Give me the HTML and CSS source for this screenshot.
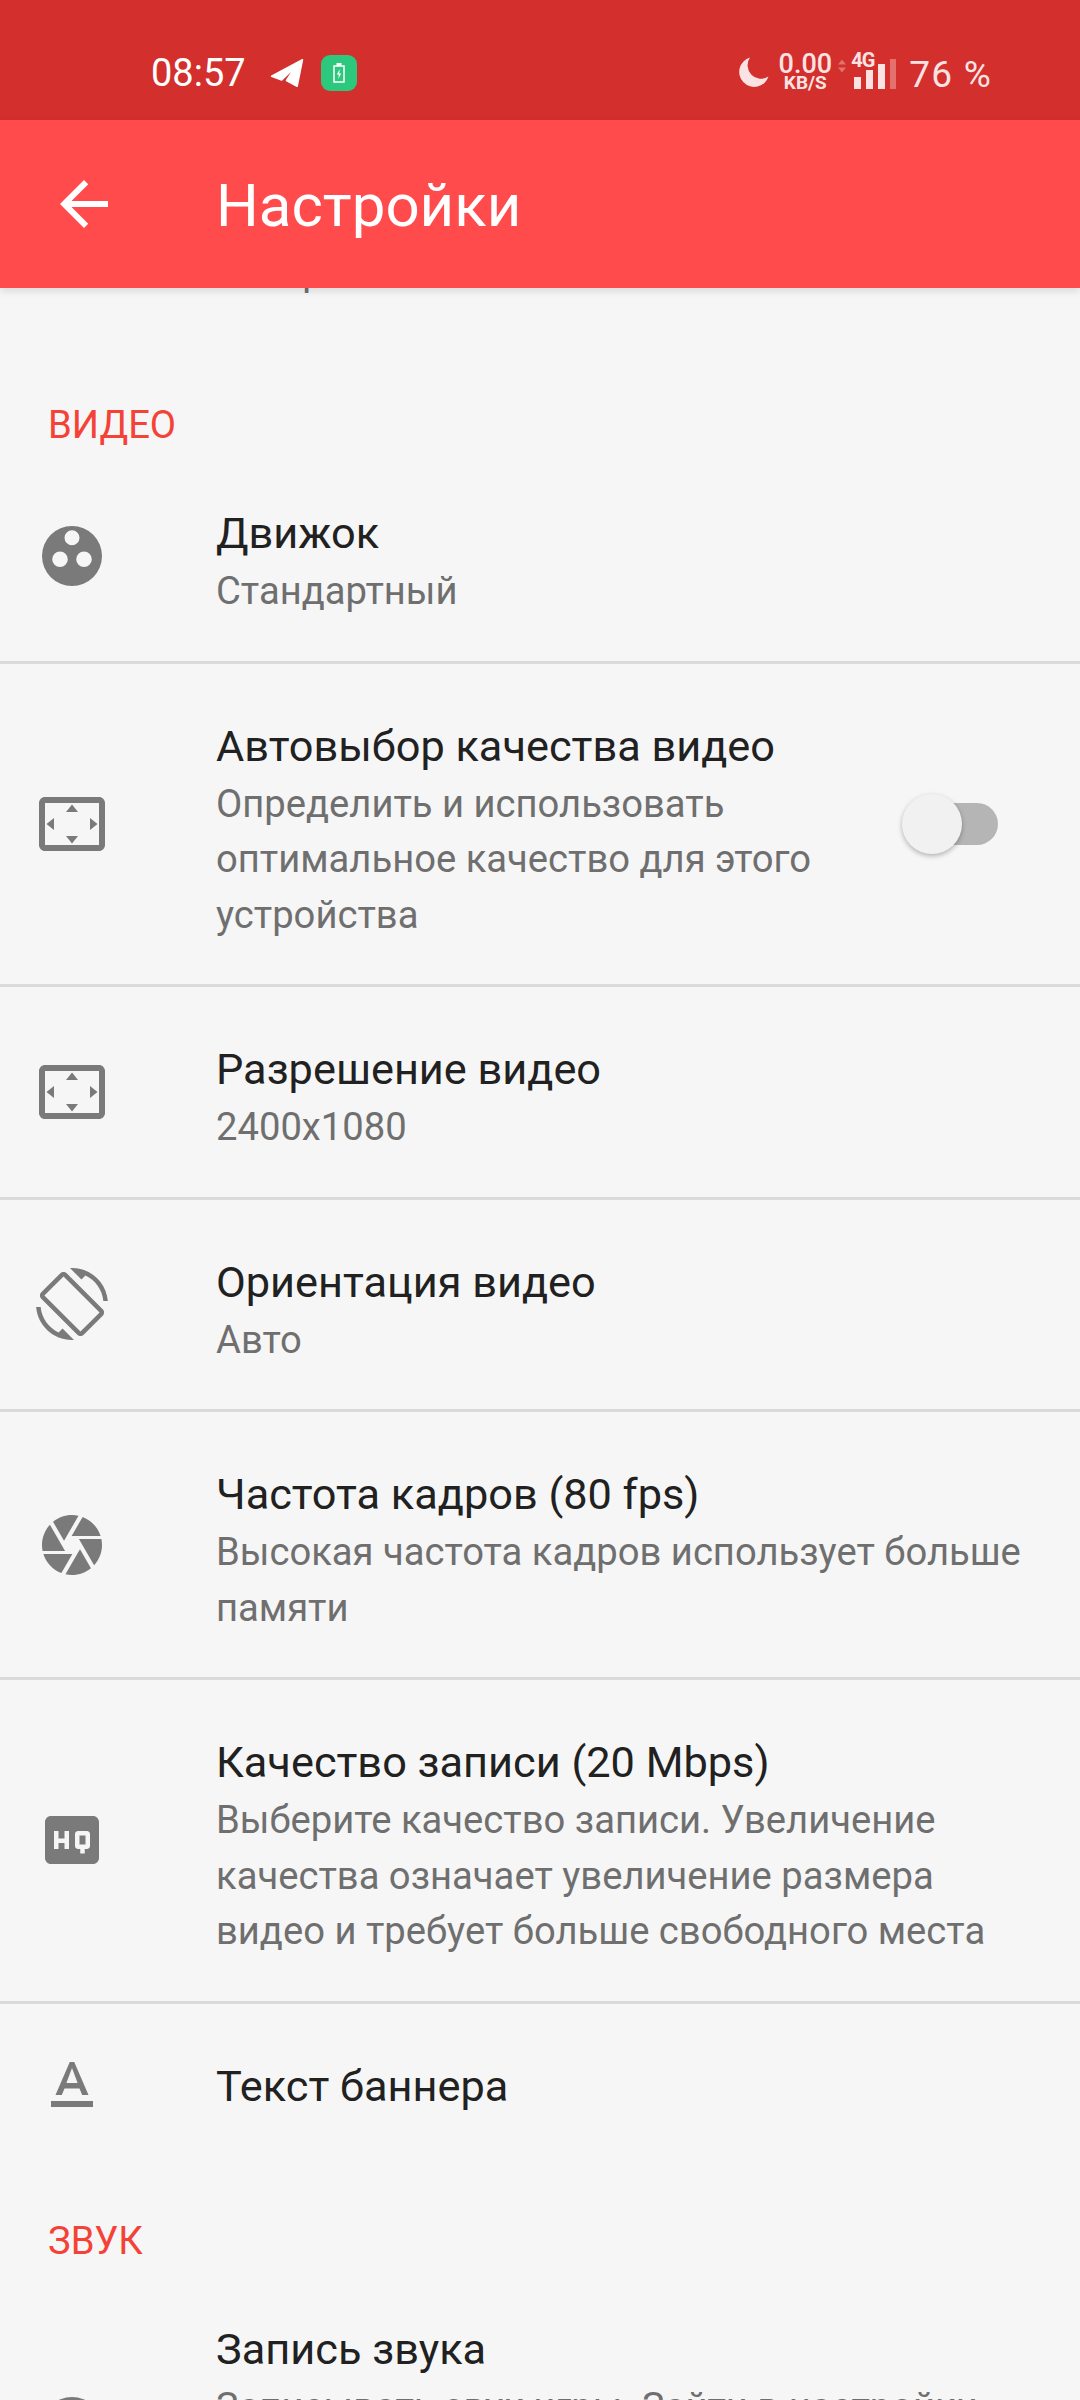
FILE: index.html
```html
<!DOCTYPE html>
<html lang="ru">
<head>
<meta charset="utf-8">
<title>Настройки</title>
<link rel="stylesheet" href="styles.css">
</head>
<body>
<div class="screen">
  <header class="statusbar">
    <div class="status-left">
      <span class="time">08:57</span>
      <svg class="tg" viewBox="0 0 32 28"><path d="M1.5 17 L30.5 1.5 L25.5 26.5 L15.5 21 L24 8 L11 20.5 Z"/></svg>
      <span class="badge">
        <svg class="badge-icon" viewBox="0 0 14 22"><path class="bat" d="M2 4h10v16H2z"/><path class="batcap" d="M4.500 1h5v3h-5z"/><path class="batcap" d="M7.800 7 4.800 12.500h2l-.6 4.500 3-5.500h-2z"/></svg>
      </span>
    </div>
    <div class="status-right">
      <svg class="moon" viewBox="0 0 30 30"><path d="M11 0.500A15 15 0 1 0 29.500 19.500 13.500 13.500 0 0 1 11 0.500Z"/></svg>
      <div class="speed"><span class="speed-num">0.00</span><span class="speed-unit">KB/S</span></div>
      <svg class="arrows" viewBox="0 0 10 16"><path d="M5 0 10 6H0zM5 16 0 10h10z"/></svg>
      <div class="signal">
        <span class="net">4G</span>
        <svg class="bars" viewBox="0 0 44 30"><path d="M0 18h7v12H0zM12 11h7v19h-7zM24 5h7v25h-7z"/><path class="bar-off" d="M36 0h6v30h-6z"/></svg>
      </div>
      <span class="pct">76 %</span>
    </div>
  </header>

  <header class="toolbar">
    <svg class="back" viewBox="0 0 24 24"><path d="M20 11H7.830l5.590-5.590L12 4l-8 8 8 8 1.410-1.410L7.830 13H20v-2z"/></svg>
    <h1 class="toolbar-title">Настройки</h1>
  </header>

  <main class="content">
    <div class="peek"><div class="peek-text">Настройки</div></div>

    <h2 class="section">Видео</h2>

    <div class="row">
      <div class="row-icon"><svg class="icon" viewBox="0 0 24 24"><path fill-rule="evenodd" d="M12 2a10 10 0 1 0 0 20 10 10 0 0 0 0-20zM12 3.400a2.500 2.500 0 1 1 0 5 2.500 2.500 0 0 1 0-5zM8 10.500a2.600 2.600 0 1 1 0 5.200 2.600 2.600 0 0 1 0-5.200zM16 10.500a2.600 2.600 0 1 1 0 5.200 2.600 2.600 0 0 1 0-5.200z"/></svg></div>
      <div class="row-text"><div class="title">Движок</div><div class="sub">Стандартный</div></div>
    </div>

    <div class="row">
      <div class="row-icon"><svg class="icon" viewBox="0 0 24 24"><path d="M12.010 5.500L10 8h4l-1.990-2.500zM18 10v4l2.500-1.990L18 10zM6 10l-2.500 2.010L6 14v-4zm8 6h-4l2.010 2.500L14 16zm7-13H3c-1.100 0-2 .9-2 2v14c0 1.100.9 2 2 2h18c1.100 0 2-.9 2-2V5c0-1.100-.9-2-2-2zm0 16.010H3V4.990h18v14.020z"/></svg></div>
      <div class="row-text narrow"><div class="title">Автовыбор качества видео</div><div class="sub">Определить и использовать оптимальное качество для этого устройства</div></div>
      <div class="switch"><span class="switch-thumb"></span></div>
    </div>

    <div class="row">
      <div class="row-icon"><svg class="icon" viewBox="0 0 24 24"><path d="M12.010 5.500L10 8h4l-1.990-2.500zM18 10v4l2.500-1.990L18 10zM6 10l-2.500 2.010L6 14v-4zm8 6h-4l2.010 2.500L14 16zm7-13H3c-1.100 0-2 .9-2 2v14c0 1.100.9 2 2 2h18c1.100 0 2-.9 2-2V5c0-1.100-.9-2-2-2zm0 16.010H3V4.990h18v14.020z"/></svg></div>
      <div class="row-text"><div class="title">Разрешение видео</div><div class="sub">2400x1080</div></div>
    </div>

    <div class="row">
      <div class="row-icon"><svg class="icon" viewBox="0 0 24 24"><path d="M16.480 2.520c3.270 1.550 5.610 4.720 5.970 8.480h1.500C23.440 4.840 18.290 0 12 0l-.66.03 3.810 3.810 1.330-1.320zm-6.250-.77c-.59-.59-1.540-.59-2.120 0L1.750 8.110c-.59.59-.59 1.540 0 2.120l12.020 12.020c.59.59 1.540.59 2.120 0l6.360-6.360c.59-.59.59-1.540 0-2.120L10.230 1.750zm4.600 19.440L2.810 9.170l6.360-6.360 12.020 12.020-6.360 6.360zm-7.310.29C4.250 19.940 1.910 16.760 1.550 13H.05C.56 19.160 5.710 24 12 24l.66-.03-3.810-3.810-1.330 1.320z"/></svg></div>
      <div class="row-text"><div class="title">Ориентация видео</div><div class="sub">Авто</div></div>
    </div>

    <div class="row">
      <div class="row-icon"><svg class="icon" viewBox="0 0 24 24"><path d="M9.400 10.500l4.770-8.260C13.470 2.090 12.750 2 12 2c-2.400 0-4.600.85-6.320 2.250l3.660 6.350.06-.1zM21.540 9c-.92-2.920-3.150-5.260-6-6.340L11.880 9h9.660zm.26 1h-7.490l.29.5 4.760 8.250C21 16.970 22 14.610 22 12c0-.69-.07-1.350-.2-2zM8.540 12l-3.900-6.750C3.010 7.030 2 9.390 2 12c0 .69.07 1.350.2 2h7.490l-1.150-2zm-6.080 3c.92 2.920 3.150 5.260 6 6.340L12.120 15H2.460zm11.270 0l-3.900 6.760c.7.15 1.420.24 2.170.24 2.400 0 4.600-.85 6.320-2.250l-3.660-6.350-.93 1.600z"/></svg></div>
      <div class="row-text"><div class="title">Частота кадров (80 fps)</div><div class="sub">Высокая частота кадров использует больше памяти</div></div>
    </div>

    <div class="row">
      <div class="row-icon"><svg class="icon" viewBox="0 0 24 24"><path d="M19 4H5c-1.110 0-2 .9-2 2v12c0 1.100.89 2 2 2h14c1.100 0 2-.9 2-2V6c0-1.100-.9-2-2-2zm-8 11H9.500v-2h-2v2H6V9h1.500v2.500h2V9H11v6zm7-1c0 .55-.45 1-1 1h-.75v1.500h-1.500V15H14c-.55 0-1-.45-1-1v-4c0-.55.45-1 1-1h3c.55 0 1 .45 1 1v4zm-3.500-.5h2v-3h-2v3z"/></svg></div>
      <div class="row-text"><div class="title">Качество записи (20 Mbps)</div><div class="sub">Выберите качество записи. Увеличение качества означает увеличение размера видео и требует больше свободного места</div></div>
    </div>

    <div class="row row-last row-plain">
      <div class="row-icon"><svg class="icon" viewBox="0 0 24 24"><path d="M5 17v2h14v-2H5zm4.500-4.200h5l.9 2.200h2.100L12.750 4h-1.500L6.500 15h2.100l.9-2.200zM12 5.980L13.870 11h-3.740L12 5.980z"/></svg></div>
      <div class="row-text"><div class="title">Текст баннера</div></div>
    </div>

    <h2 class="section">Звук</h2>

    <div class="row row-last row-tail">
      <div class="row-icon"><svg class="icon" viewBox="0 0 24 24"><circle cx="12" cy="12" r="10"/></svg></div>
      <div class="row-text"><div class="title">Запись звука</div><div class="sub">Записывать звук игры. Зайти в настройки записи и выбрать источник звука для этого устройства</div></div>
    </div>
  </main>
</div>
</body>
</html>
```
FILE: styles.css
```css
* { box-sizing: border-box; }
html, body { margin: 0; padding: 0; }
body { width: 1080px; height: 2400px; overflow: hidden; background: #f6f6f6; font-family: Roboto, "Liberation Sans", sans-serif; }
.screen { width: 1080px; height: 2400px; overflow: hidden; display: flex; flex-direction: column; }

.statusbar { flex: 0 0 120px; background: #d32f2c; color: #fff; display: flex; justify-content: space-between; align-items: center; padding: 26px 88px 0 151px; }
.status-left { display: flex; align-items: center; }
.time { font-size: 38px; line-height: 44px; width: 119px; }
.tg { width: 34px; height: 30px; fill: #fff; stroke: #fff; stroke-width: 1.5; stroke-linejoin: round; margin-right: 17px; }
.badge { width: 36px; height: 36px; border-radius: 9px; background: #2bc87d; display: flex; align-items: center; justify-content: center; }
.badge-icon { width: 14px; height: 22px; }
.bat { fill: none; stroke: #fff; stroke-width: 1.500; }
.batcap { fill: #fff; }

.status-right { display: flex; align-items: center; color: #fbe3e3; }
.moon { width: 30px; height: 30px; fill: #fbe3e3; margin-right: 8px; margin-top: -2px; }
.speed { display: flex; flex-direction: column; align-items: center; width: 56px; font-weight: 700; margin-top: -2px; }
.speed-num { font-size: 27px; line-height: 22px; font-weight: 500; }
.speed-unit { font-size: 19px; line-height: 16px; }
.arrows { width: 8px; height: 14px; fill: #e4716e; margin: -14px 5px 0 5px; }
.signal { display: flex; flex-direction: column; width: 46px; margin-top: -4px; }
.net { font-size: 20px; line-height: 14px; font-weight: 700; letter-spacing: -1px; margin-bottom: -8px; }
.bars { width: 44px; height: 30px; fill: #fbe3e3; margin-left: 3px; }
.bar-off { fill: #e4716e; }
.pct { font-size: 37px; line-height: 40px; margin: 3px 0 0 12px; letter-spacing: 1.200px; white-space: nowrap; }

.toolbar { flex: 0 0 168px; background: #ff4b4b; display: flex; align-items: center; position: relative; z-index: 2; box-shadow: 0 3px 8px rgba(0, 0, 0, 0.12); padding-left: 48px; }
.back { width: 72px; height: 72px; fill: #fff; flex: none; }
.toolbar-title { margin: 4px 0 0 96px; font-size: 60px; line-height: 72px; font-weight: 400; color: #fff; }

.content { flex: 1; overflow: hidden; display: flex; flex-direction: column; }
.peek { flex: 0 0 64px; overflow: hidden; }
.peek-text { margin: -43px 0 0 216px; font-size: 38.200px; line-height: 55px; color: #6f6f6f; }

.section { margin: 0; flex: 0 0 99px; padding: 51px 0 0 48px; font-size: 38.200px; line-height: 44px; font-weight: 400; color: #f44336; text-transform: uppercase; }

.row { flex: none; display: flex; align-items: center; padding: 43px 48px 43px 0; border-bottom: 3px solid #dadada; }
.row-last { border-bottom: 0; }
.row-tail { padding-bottom: 49px; }
.row-icon { flex: 0 0 144px; display: flex; justify-content: center; }
.icon { width: 72px; height: 72px; fill: #7a7a7a; display: block; }
.row-text { flex: 1; margin: 0 0 -2px 72px; padding-top: 12px; }
.row-text.narrow { flex: 0 0 654px; }
.row-plain .row-text { padding-bottom: 10px; }
.title { font-size: 43.300px; line-height: 56px; color: #212121; margin-bottom: 2px; }
.sub { font-size: 38.200px; line-height: 55.500px; color: #6f6f6f; }

.switch { width: 86px; height: 42px; border-radius: 21px; background: #b5b5b5; margin-left: 42px; position: relative; flex: none; }
.switch-thumb { position: absolute; left: -10px; top: -9px; width: 60px; height: 60px; border-radius: 50%; background: #f1f1f1; box-shadow: 0 2px 5px rgba(0, 0, 0, 0.28); }
```
